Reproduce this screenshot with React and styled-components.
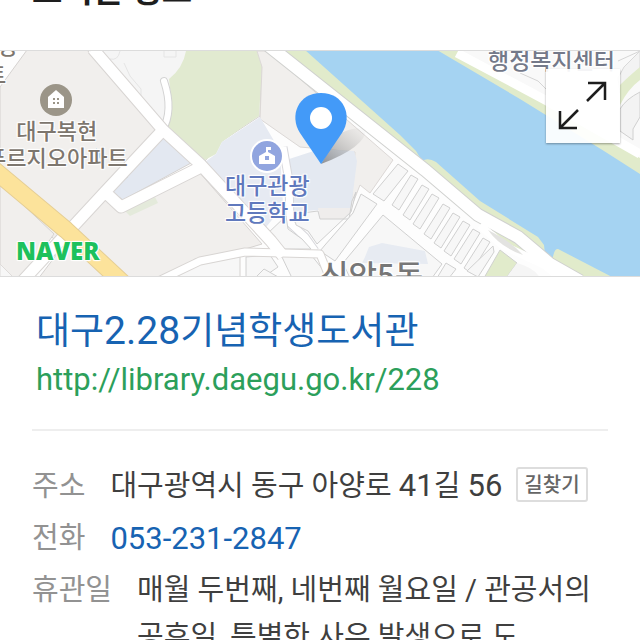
import React from 'react';
import styled, { createGlobalStyle } from 'styled-components';

const GlobalStyle = createGlobalStyle`
  * {
    box-sizing: border-box;
  }

  body {
    margin: 0;
    background: #fff;
    font-family: Roboto, "Noto Sans CJK KR", sans-serif;
    color: #3f3f3f;
  }
`;

const Page = styled.main`
  height: 100vh;
  overflow: hidden;
`;

// the page is scrolled a little, so the heading starts above the window
const Heading = styled.h2`
  margin: -33px 0 0;
  padding: 0 32px 35px;
  font-size: 33px;
  line-height: 48px;
  font-weight: 700;
  color: #1e1e1e;
`;

const MapBox = styled.section`
  position: relative;
  height: 227px;
  overflow: hidden;
  border-top: 1px solid #dcdcdc;
  border-bottom: 1px solid #dcdcdc;
`;

const MapDrawing = styled.svg`
  display: block;
  width: 100%;
  height: 100%;
`;

const MapLabel = styled.span`
  position: absolute;
  left: ${(props) => props.$x}px;
  top: ${(props) => props.$y}px;
  font-size: ${(props) => props.$size || 22}px;
  line-height: 27px;
  font-weight: 500;
  font-family: "Noto Sans CJK KR", sans-serif;
  text-align: center;
  white-space: pre;
  color: ${(props) => props.$color || '#7d766e'};
  text-shadow: 1px 1px 1px #fff, -1px -1px 1px #fff, 1px -1px 1px #fff, -1px 1px 1px #fff;
`;

const NaverLogo = styled.span`
  position: absolute;
  left: 16px;
  bottom: 8px;
  font-family: "Open Sans", sans-serif;
  font-size: 24px;
  line-height: 34px;
  font-weight: 800;
  color: #1dc15c;
  text-shadow: 1px 1px 1px #fff, -1px -1px 1px #fff, 1px -1px 1px #fff, -1px 1px 1px #fff;
`;

const ExpandButton = styled.button`
  position: absolute;
  top: 18px;
  right: 20px;
  width: 74px;
  height: 74px;
  padding: 0;
  border: 0;
  background: rgba(255, 255, 255, 0.92);
  box-shadow: 0 1px 2px rgba(0, 0, 0, 0.35);
  cursor: pointer;

  svg {
    display: block;
  }
`;

const Place = styled.header`
  margin: 0 32px;
  padding: 29px 4px 27px;
  border-bottom: 2px solid #eeeeee;
`;

const PlaceName = styled.a`
  display: block;
  font-size: 37px;
  line-height: 52px;
  color: #1763b2;
  text-decoration: none;
`;

const PlaceUrl = styled.a`
  display: block;
  font-size: 31px;
  line-height: 44px;
  color: #2c9f5b;
  text-decoration: none;
`;

const Num = styled.span`
  font-size: ${(props) => (props.$large ? 39 : 31)}px;
  line-height: 1;
`;

const InfoList = styled.dl`
  display: flex;
  flex-direction: column;
  gap: 5px;
  margin: 0;
  padding: 32px 32px 0;
  font-size: 29px;
  line-height: 47px;
`;

const InfoRow = styled.div`
  display: flex;
  gap: 25px;
`;

const InfoName = styled.dt`
  flex: none;
  color: #929292;
`;

const InfoValue = styled.dd`
  display: flex;
  align-items: center;
  gap: 14px;
  margin: 0;
`;

const PhoneLink = styled.a`
  font-size: 31px;
  color: #1763b2;
  text-decoration: none;
`;

const RouteButton = styled.button`
  height: 35px;
  margin-bottom: 4px;
  padding: 0 6px;
  border: 2px solid #dddddd;
  border-radius: 3px;
  background: #fff;
  font-family: inherit;
  font-size: 20px;
  line-height: 28px;
  font-weight: 500;
  color: #666;
  cursor: pointer;
`;

// narrow building lots along the river road: [x, y] of the upper left corner
const lots = [
  [411, 174], [422, 184], [432, 193], [443, 203], [453, 212],
  [463, 220], [473, 228], [483, 237],
];

const MapPicture = () => (
  <MapDrawing viewBox="0 50 640 225" preserveAspectRatio="xMidYMid slice" aria-hidden="true">
    <rect x="0" y="50" width="640" height="227" fill="#fdfdfd" />

    {/* blocks on the left */}
    <g stroke="#d5d2d0" strokeWidth="1">
      <path d="M27 49H87L156 129 100 188 73 220 54 238 0 190V86Z" fill="#f1efed" />
      <path d="M0 182L54 233 22 278H0Z" fill="#f1efed" />
      <path d="M104 198L120 211 199 171 262 243 225 254 195 258 166 278H38L60 249Z" fill="#f1efed" />
      <path d="M200 262L215 259 240 256V278H166Z" fill="#f7f7f7" />
      <path d="M100 49H262L260 115 222 140 205 160 170 130 163 122Z" fill="#f5f5f5" />
      <path d="M164 135L191 162 123 199 111 190Z" fill="#e3e8f1" />
    </g>
    <path d="M0 263L15 278H0Z" fill="#f7f7f7" stroke="#dedbd9" />
    <path d="M125 210L155 196 158 202 130 215Z" fill="#e4eadb" />
    <path d="M96 147Q104 153 105 162 98 159 96 147Z" fill="#9ed0ee" />
    <path d="M120 167L127 177" stroke="#c2c9cc" strokeWidth="2" />
    <path d="M120 50Q118 60 110 58M124 62L130 75 141 88V97M164 50V56H176V50" fill="none" stroke="#e5e5e5" />

    {/* park */}
    <path d="M186 50Q183 67 169 78L172 105 165 124 201 161 216 153 222 141 240 128 259 115 262 66 257 50Z" fill="#e1ead0" />
    <path d="M164 80Q174 110 162 130" fill="none" stroke="#d3d3d3" strokeWidth="8" strokeLinecap="round" />
    <path d="M164 80Q174 110 162 130" fill="none" stroke="#fff" strokeWidth="6" strokeLinecap="round" />

    {/* school grounds */}
    <path d="M257 50H268L393 159 370 192 360 184 351 207 355 151 300 146 260 118 262 66Z" fill="#f1efed" stroke="#dcd8d6" />
    <path d="M205 161L216 153 222 141 260 116 280 150 283 205 263 230Z" fill="#e6eaf2" />
    <path d="M286 159L320 148 354 150 357 160 351 207 289 211Z" fill="#e4e9f1" />
    <path d="M318 207H352L349 218H320Z" fill="#efedec" />
    <path d="M283 146L289 180 290 222 305 236 315 250" fill="none" stroke="#d8d8dc" strokeWidth="9" />
    <path d="M283 146L289 180 290 222 305 236 315 250" fill="none" stroke="#fff" strokeWidth="7" />

    {/* blocks between the school and the river road */}
    <g fill="#f7f7f7" stroke="#d0d0d0" strokeWidth="1" strokeLinejoin="round">
      <path d="M294 213L318 210 320 218 349 218 352 200 356 191 351 211 317 243 308 230 296 224Z" />
      <path d="M267 233L286 215 288 228 302 238 311 248H276Z" />
      <path d="M361 193L377 203 335 260 320 250 325 244 353 212Z" />
      <path d="M383 214L343 262 350 277H432L442 263Z" />
      <path d="M246 256L270 254 278 266 262 277H246Z" />
      <path d="M281 254L312 255 324 270V277H292Z" />
      <path d="M255 277L264 268 280 277Z" />
      <path d="M398 163L408 170 384 200 373 193Z" />
      {lots.map(([x, y]) => (
        <path key={x} d={`M${x} ${y}l7 4-19 31-7-5Z`} />
      ))}
      <path d="M493 245L494 251 478 276 467 270Z" />
      <path d="M446 262L456 268 449 277H437Z" />
    </g>
    <path d="M365 256L369 246 382 242 425 250 428 263 362 262Z" fill="#e7ebf2" />

    {/* roads on the left */}
    <g fill="none" strokeLinejoin="round">
      <path d="M93 48L163 129 200 163 271 240 283 255" stroke="#d8d5d3" strokeWidth="13" />
      <path d="M163 129L105 191 18 285M105 191L121 206 199 167" stroke="#d8d5d3" strokeWidth="13" />
      <path d="M150 284L200 260 245 251 320 253 330 278" stroke="#d8d5d3" strokeWidth="9" />
      <path d="M93 48L163 129 200 163 271 240 283 255" stroke="#fff" strokeWidth="11" />
      <path d="M163 129L105 191 18 285M105 191L121 206 199 167" stroke="#fff" strokeWidth="11" />
      <path d="M150 284L200 260 245 251 320 253 330 278" stroke="#fff" strokeWidth="7" />
      <path d="M-8 167L66 229 124 283" stroke="#e5ce95" strokeWidth="18" />
      <path d="M-8 167L66 229 124 283" stroke="#fce39b" strokeWidth="16" />
    </g>

    {/* river with its banks */}
    <path d="M283 49H457L545 100 640 157V277H560L530 258 500 236 470 210 422 168Z" fill="#e1ebcb" />
    <path d="M305 49H437L520 98 604 150 640 173V277H614L560 249Q556 246 554 252L551 262H546L544 244 538 236 480 200 436 161Q428 156 422 160L416 150 400 134Z" fill="#a5d3f2" />
    <path d="M264 41L425 169 478 214 518 236 550 263 580 280" fill="none" stroke="#d0d1cf" strokeWidth="14" />
    <path d="M264 41L425 169 478 214 518 236 550 263 580 280" fill="none" stroke="#fff" strokeWidth="12" />
    <path d="M480 224L502 244 545 264 560 277" fill="none" stroke="#fff" strokeWidth="8" />
    <path d="M488 229Q512 241 523 254 500 246 488 229Z" fill="#e3e3e1" />
    <path d="M500 249L517 262 506 277H484Z" fill="#e1ebcb" stroke="#d0d1cf" />
    <path d="M517 262Q535 267 540 277H506Z" fill="#f5f5f5" />

    {/* north bank */}
    <path d="M457 49L545 96 640 153V49Z" fill="#f9f9f9" />
    <path d="M457 52L547 100 640 153" fill="none" stroke="#fff" strokeWidth="9" />
    <path d="M520 72L538 80 546 88M618 60L640 50" fill="none" stroke="#d5d5d5" />
    <path d="M618 77L624 66 640 50V68L620 92Z" fill="#f3f3f3" stroke="#d9d9d9" />
    <path d="M620 84Q628 76 640 66V79Q628 88 620 104Z" fill="#e1ebcb" />
    <path d="M620 108Q626 98 640 91V116L633 128V139L620 130Z" fill="#f3f3f3" stroke="#d0d0d0" />

    {/* apartment and school markers */}
    <circle cx="56" cy="99" r="16" fill="#9b9588" />
    <path d="M48 96L56 89 64 96V107H48Z" fill="#fff" />
    <path d="M53 97h2v2h-2zM57 97h2v2h-2zM53 101h2v2h-2zM57 101h2v2h-2z" fill="#9b9588" />
    <circle cx="267" cy="155" r="17" fill="#fff" />
    <circle cx="267" cy="155" r="15" fill="#91a5df" />
    <path d="M259 155L266 151V146H271V149H268V151L275 155V163H259Z" fill="#fff" />
    <rect x="265" y="155" width="4" height="4" fill="#91a5df" />

    {/* pin */}
    <defs>
      <linearGradient id="pinShadow" x1="0" y1="1" x2="1" y2="0">
        <stop offset="0" stopColor="#555" stopOpacity="0.6" />
        <stop offset="1" stopColor="#999" stopOpacity="0" />
      </linearGradient>
    </defs>
    <path d="M321 163L338 134Q352 125 366 128 366 146 321 163Z" fill="url(#pinShadow)" />
    <path d="M321 163L300 132C289 115 298 92 321 92S353 115 342 132Z" fill="#439af8" />
    <circle cx="321" cy="117" r="11" fill="#fff" />
  </MapDrawing>
);

const App = () => {
  return (
    <Page>
      <GlobalStyle />
      <Heading>도서관 정보</Heading>

      <MapBox>
        <MapPicture />
        <MapLabel $x={-3} $y={-20}>성</MapLabel>
        <MapLabel $x={-14} $y={9}>트</MapLabel>
        <MapLabel $x={-14} $y={65}>{'대구복현\n푸르지오아파트'}</MapLabel>
        <MapLabel $x={225} $y={120} $size={23} $color="#6079bd">{'대구관광\n고등학교'}</MapLabel>
        <MapLabel $x={488} $y={-5} $size={23} $color="#747989">행정복지센터</MapLabel>
        <MapLabel $x={320} $y={209} $size={31} $color="#777">신암5동</MapLabel>
        <NaverLogo>NAVER</NaverLogo>
        <ExpandButton type="button" aria-label="지도 확대">
          <svg width="74" height="74" viewBox="0 0 74 74" fill="none" stroke="#1d1d1d" strokeWidth="2.5">
            <path d="M42 14H59V31M59 14L41 32M14 42V59H31M14 59L32 41" />
          </svg>
        </ExpandButton>
      </MapBox>

      <Place>
        <PlaceName href="#library">
          대구<Num $large>2.28</Num>기념학생도서관
        </PlaceName>
        <PlaceUrl href="#homepage">http://library.daegu.go.kr/228</PlaceUrl>
      </Place>

      <InfoList>
        <InfoRow>
          <InfoName>주소</InfoName>
          <InfoValue>
            <span>대구광역시 동구 아양로 <Num>41</Num>길 <Num>56</Num></span>
            <RouteButton type="button">길찾기</RouteButton>
          </InfoValue>
        </InfoRow>
        <InfoRow>
          <InfoName>전화</InfoName>
          <InfoValue>
            <PhoneLink href="tel:053-231-2847">053-231-2847</PhoneLink>
          </InfoValue>
        </InfoRow>
        <InfoRow>
          <InfoName>휴관일</InfoName>
          <InfoValue>
            매월 두번째, 네번째 월요일 / 관공서의 공휴일, 특별한 사유 발생으로 도
          </InfoValue>
        </InfoRow>
      </InfoList>
    </Page>
  );
};

export default App;
